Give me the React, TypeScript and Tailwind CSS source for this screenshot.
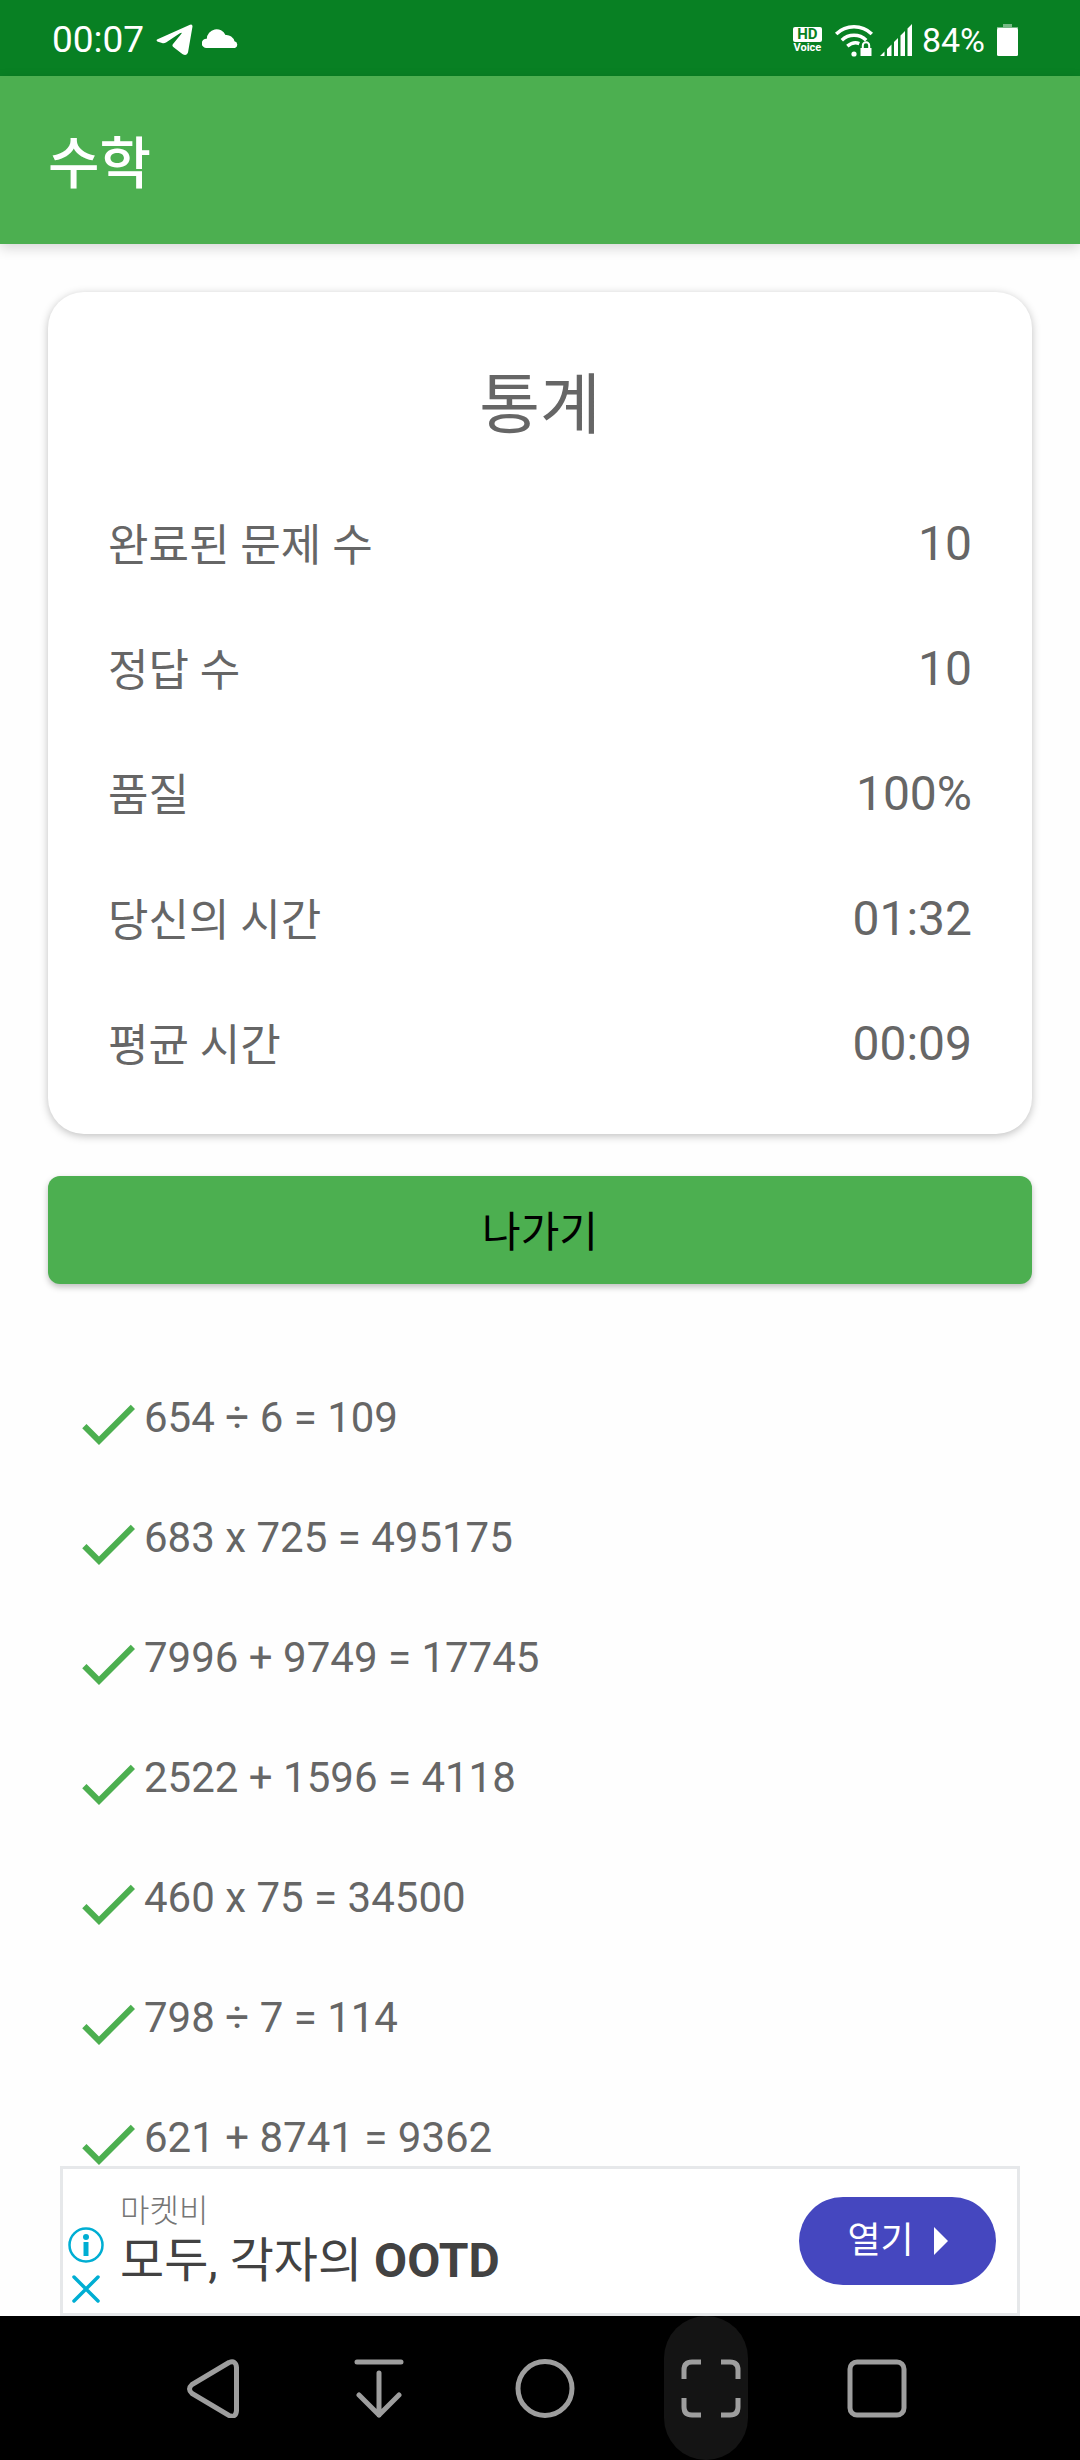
const stats = [
  { label: "완료된 문제 수", value: "10" },
  { label: "정답 수", value: "10" },
  { label: "품질", value: "100%" },
  { label: "당신의 시간", value: "01:32" },
  { label: "평균 시간", value: "00:09" },
];

const answers = [
  "654 ÷ 6 = 109",
  "683 x 725 = 495175",
  "7996 + 9749 = 17745",
  "2522 + 1596 = 4118",
  "460 x 75 = 34500",
  "798 ÷ 7 = 114",
  "621 + 8741 = 9362",
];

const StatusBar = () => (
  <div className="flex h-[76px] items-center justify-between bg-[#088023] pt-1 pr-[62px] pl-[52px] text-white">
    <div className="flex items-center">
      <span className="text-[37px] leading-[44px]">00:07</span>
      <svg className="ml-3 h-8 w-[38px]" viewBox="0 0 38 32" fill="currentColor">
        <path d="M1 15.500Q0 16.500 1.300 17.500L6 19q2 .6 4-.5L23.500 9.500q3.500-2 1.500.8L17 20q-1.300 1.600.3 3l9 7q4.500 2.500 5.700-1.500L36.500 2.500Q36.500 0 34 .8Z" />
      </svg>
      <svg className="mb-1 ml-2 h-5 w-9" viewBox="0 0 36 20" fill="currentColor">
        <path d="M4 20a4.500 4.500 0 0 1 .8-9.300A9.800 9.800 0 0 1 23.500 7 8.300 8.300 0 0 1 32.500 13.300 3.500 3.500 0 0 1 33 20Z" />
      </svg>
    </div>
    <div className="flex items-center">
      <div className="flex flex-col items-center font-bold">
        <span className="h-[15px] w-[29px] rounded-[2px] bg-white text-center text-[15px] leading-[15px] text-[#088023]">HD</span>
        <span className="text-[11px] leading-[12px]">Voice</span>
      </div>
      <svg className="ml-3 h-9 w-10" viewBox="0 0 40 36" fill="none" stroke="currentColor" strokeWidth="3.500">
        <path d="M2.200 12a25.500 25.500 0 0 1 35.600 0M7.800 18.200a17.500 17.500 0 0 1 24.400 0M13.300 24.200q6-5 12-2.600" />
        <circle cx="20" cy="32" r="2.600" fill="currentColor" stroke="none" />
        <path d="M26.500 26h11v8h-11z" fill="currentColor" stroke="none" />
        <path d="M28.800 26v-2.500a3.200 3.200 0 0 1 6.400 0V26" strokeWidth="2" />
      </svg>
      <svg className="ml-[6px] h-8 w-8" viewBox="0 0 32 32" fill="currentColor">
        <path d="M0 32l4.500-4.500v4.500zM7 32v-7l4.500-4.500v11.500zM14 32V18l4-4v18zM20.500 32V11.500l4.500-4.500v25zM27.500 32V4.500L32 0v32z" />
      </svg>
      <span className="ml-[10px] text-[34px] leading-[44px]">84%</span>
      <svg className="ml-3 h-8 w-[21px]" viewBox="0 0 21 32" fill="currentColor">
        <path d="M6 0h9v3h6v2H0V3h6z" opacity="0.450" />
        <rect y="4" width="21" height="28" rx="1.500" />
      </svg>
    </div>
  </div>
);

const CheckIcon = () => (
  <svg className="h-[72px] w-[72px]" viewBox="0 0 24 24" fill="#4caf50">
    <path d="M9 16.170L4.830 12l-1.420 1.410L9 19 21 7l-1.410-1.410z" />
  </svg>
);

const AdBanner = () => (
  <aside className="mx-[60px] flex h-[150px] items-center border-[3px] border-[#e6e8ea] bg-white">
    <div className="flex h-full w-[57px] shrink-0 flex-col items-center justify-end gap-2 pr-3 pb-[6px]">
      <button aria-label="광고 정보">
        <svg className="h-9 w-9" viewBox="0 0 36 36" fill="none" stroke="#00aed3">
          <circle cx="18" cy="18" r="16.500" strokeWidth="2.500" />
          <circle cx="18" cy="10" r="3" fill="#00aed3" stroke="none" />
          <path d="M18 15v14" strokeWidth="5" />
        </svg>
      </button>
      <button aria-label="광고 닫기">
        <svg className="h-9 w-9" viewBox="0 0 36 36" fill="none" stroke="#00aed3" strokeWidth="3.500" strokeLinecap="round">
          <path d="M6 6l24 24M30 6L6 30" />
        </svg>
      </button>
    </div>
    <div className="min-w-0 flex-1 pb-1">
      <p className="text-[32px] leading-[44px] font-light text-[#757575]">마켓비</p>
      <p className="text-[48px] leading-[56px] text-[#424242]">
        모두, 각자의 <span className="font-bold">OOTD</span>
      </p>
    </div>
    <button className="mr-[21px] flex h-[88px] w-[197px] shrink-0 items-center justify-center gap-5 rounded-full bg-[#4547bf] text-[36px] text-white">
      열기
      <svg className="h-7 w-[14px]" viewBox="0 0 14 28" fill="currentColor">
        <path d="M0 0l14 14L0 28z" />
      </svg>
    </button>
  </aside>
);

const navButton = "flex h-full w-[166px] items-center justify-center";
const navIcon = "h-[60px] w-[60px]";

const NavBar = () => (
  <nav className="flex h-[144px] justify-center bg-black pl-[10px] text-[#9e9e9e]">
    <button className={navButton} aria-label="뒤로">
      <svg className={navIcon} viewBox="0 0 60 60" fill="none" stroke="currentColor" strokeWidth="5">
        <path d="M46 4.500L9 26.500q-5 4.500 0 9L46 57.500q7 2.500 7.500-5V9.500q-.5-7.500-7.500-5z" />
      </svg>
    </button>
    <button className={navButton} aria-label="알림창 열기">
      <svg className={navIcon} viewBox="0 0 60 60" fill="none" stroke="currentColor" strokeWidth="5" strokeLinecap="round" strokeLinejoin="round">
        <path d="M8 4h44M30 15v42M10 37l20 20 20-20" />
      </svg>
    </button>
    <button className={navButton} aria-label="홈">
      <svg className={navIcon} viewBox="0 0 60 60" fill="none" stroke="currentColor" strokeWidth="5">
        <circle cx="30" cy="30.500" r="27" />
      </svg>
    </button>
    <button className={navButton} aria-label="화면 캡처">
      <span className="mr-[10px] flex h-full w-[84px] items-center justify-end rounded-full bg-[#141414] pr-[7px]">
        <svg className={navIcon} viewBox="0 0 60 60" fill="none" stroke="currentColor" strokeWidth="5">
          <path d="M3 21v-9q0-8 8-8h9M40 4h9q8 0 8 8v9M57 40v9q0 8-8 8h-9M20 57h-9q-8 0-8-8v-9" />
        </svg>
      </span>
    </button>
    <button className={navButton} aria-label="최근 앱">
      <svg className={navIcon} viewBox="0 0 60 60" fill="none" stroke="currentColor" strokeWidth="5">
        <rect x="3" y="4" width="54" height="53" rx="7" />
      </svg>
    </button>
  </nav>
);

const App = () => {
  return (
    <div className="flex h-screen flex-col overflow-hidden bg-[#fefefe] font-['Roboto','Noto_Sans_CJK_KR',sans-serif] text-[#666666]">
      <StatusBar />
      <header className="flex h-[168px] shrink-0 items-center bg-[#4caf50] px-12 pt-2 shadow-[0_4px_12px_rgba(0,0,0,0.16)]">
        <h1 className="text-[56px] leading-[72px] font-medium text-white">수학</h1>
      </header>

      <main className="min-h-0 flex-1 overflow-hidden px-12 pt-12">
        <section className="rounded-[36px] bg-white px-[60px] pt-16 pb-7 shadow-[0_2px_8px_rgba(0,0,0,0.25)]">
          <h2 className="text-center text-[66px] leading-[100px]">통계</h2>
          <dl className="pt-[25px]">
            {stats.map((stat) => (
              <div key={stat.label} className="flex h-[125px] items-center justify-between">
                <dt className="pt-1 text-[44px] leading-[60px]">{stat.label}</dt>
                <dd className="text-[48px] leading-[60px]">{stat.value}</dd>
              </div>
            ))}
          </dl>
        </section>

        <button className="mt-[42px] h-[108px] w-full rounded-xl bg-[#4caf50] pt-1 text-[42px] text-black shadow-[0_3px_6px_rgba(0,0,0,0.25)]">
          나가기
        </button>

        <ul className="px-6 pt-20">
          {answers.map((answer) => (
            <li key={answer} className="flex h-[120px] items-center">
              <CheckIcon />
              <span className="pb-3 text-[42px] leading-[50px]">{answer}</span>
            </li>
          ))}
        </ul>
      </main>

      <AdBanner />
      <NavBar />
    </div>
  );
};

export default App;
